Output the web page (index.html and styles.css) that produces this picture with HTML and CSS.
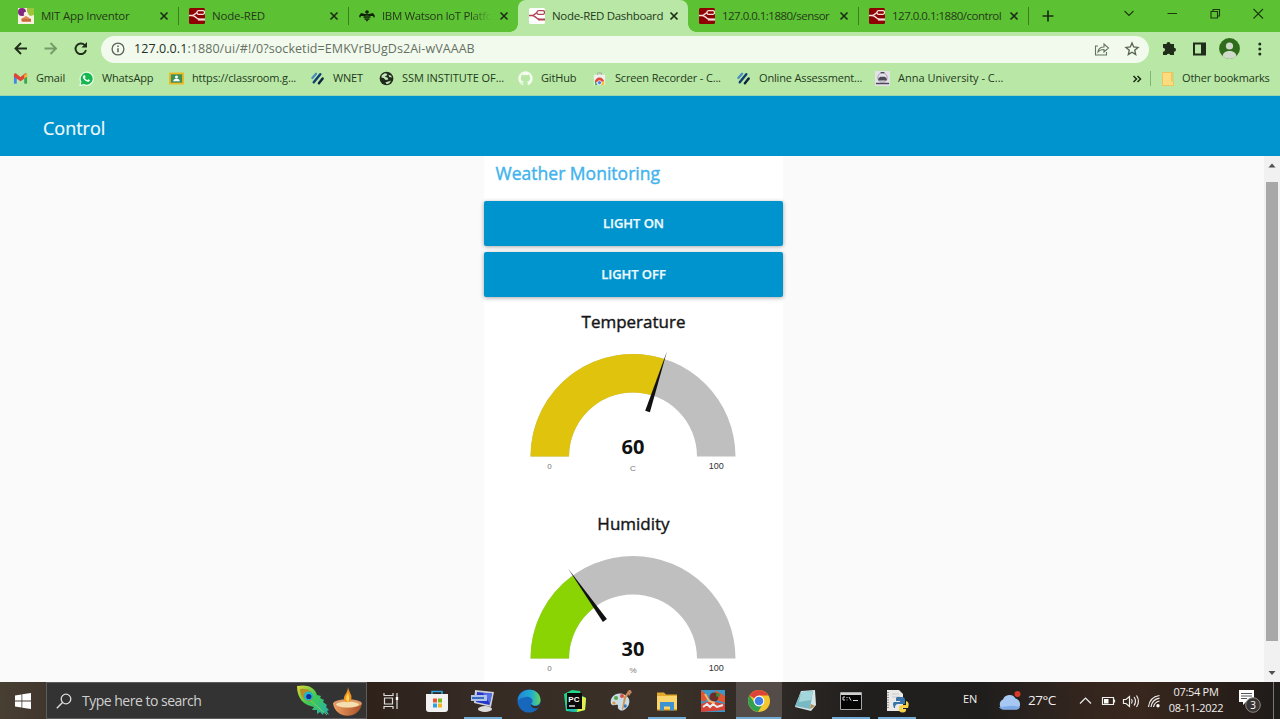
FILE: index.html
```html
<!DOCTYPE html>
<html lang="en">
<head>
<meta charset="utf-8">
<title>Node-RED Dashboard</title>
<link rel="stylesheet" href="styles.css">
</head>
<body>
<svg class="defs" width="0" height="0">
  <defs>
    <symbol id="close" viewBox="0 0 10 10"><path d="M1.5 1.5l7 7M8.5 1.5l-7 7" stroke="#1c2e14" stroke-width="1.7"/></symbol>
    <symbol id="nodered" viewBox="0 0 16 16"><rect width="16" height="16" rx="1.5" fill="#8f0000"/><path d="M0 7.500h3c3 0 3-3 6-3M3 7.500c4 0 4 4 7.500 4" fill="none" stroke="#f3dcdc" stroke-width="1.500"/><rect x="8" y="2.700" width="7.500" height="3.600" rx="1.600" fill="#8f0000" stroke="#f3dcdc" stroke-width="1.300"/><path d="M9 11.500h7" stroke="#f3dcdc" stroke-width="2.200"/></symbol>
    <symbol id="wnet" viewBox="0 0 16 16"><g fill="none" stroke-linecap="round"><path d="M2.500 7.500L6.500 3" stroke="#4b8dbd" stroke-width="2.400"/><path d="M4 12L11 3.500" stroke="#123f73" stroke-width="2.600"/><path d="M9.500 13L13.500 8" stroke="#10233c" stroke-width="2.600"/></g></symbol>
  </defs>
</svg>

<div class="screen">
<header class="browser">
  <div class="tabstrip">
    <div class="tab">
      <svg class="fav" viewBox="0 0 16 16"><rect width="16" height="16" fill="#f6f1e4"/><circle cx="4" cy="4" r="4" fill="#82287e"/><path d="M9 0h7v7l-4 1-3-3z" fill="#9cc53c"/><circle cx="8" cy="6" r="2.300" fill="#f6f1e4"/><path d="M3 11l5-3 5 3v3H4z" fill="#df8a4c"/><path d="M4 12h9" stroke="#a44b36"/></svg>
      <span class="title t1">MIT App Inventor</span><svg class="close"><use href="#close"/></svg>
    </div>
    <div class="tab"><svg class="fav"><use href="#nodered"/></svg><span class="title t2">Node-RED</span><svg class="close"><use href="#close"/></svg></div>
    <div class="tab">
      <svg class="fav" viewBox="0 0 16 16"><g fill="#10210a"><path d="M0 8l2-3 4 1 1 1-1 1-4 0-1 2zM16 8l-2-3-4 1-1 1 1 1 4 0 1 2z"/><circle cx="8" cy="4" r="1.800"/><rect x="5" y="6" width="6" height="1.700"/><rect x="4.500" y="8.300" width="7" height="1.500"/><rect x="5.500" y="10.400" width="5" height="1.400"/><rect x="7" y="12.200" width="2" height="1"/></g></svg>
      <span class="title t3 fade">IBM Watson IoT Platfo</span><svg class="close"><use href="#close"/></svg>
    </div>
    <div class="tab active">
      <svg class="fav" viewBox="0 0 16 16"><rect width="16" height="16" rx="1.500" fill="#fff"/><path d="M0 7.500h3c3 0 3-3 6-3M3 7.500c4 0 4 4 7.500 4" fill="none" stroke="#b04456" stroke-width="1.500"/><rect x="8" y="2.700" width="7.500" height="3.600" rx="1.600" fill="#fff" stroke="#b04456" stroke-width="1.300"/><path d="M9 11.500h7" stroke="#b04456" stroke-width="2"/></svg>
      <span class="title t4">Node-RED Dashboard</span><svg class="close"><use href="#close"/></svg>
    </div>
    <div class="tab"><svg class="fav"><use href="#nodered"/></svg><span class="title t5">127.0.0.1:1880/sensor</span><svg class="close"><use href="#close"/></svg></div>
    <div class="tab"><svg class="fav"><use href="#nodered"/></svg><span class="title t6">127.0.0.1:1880/control</span><svg class="close"><use href="#close"/></svg></div>
    <svg class="newtab" viewBox="0 0 12 12"><path d="M6 .5v11M.5 6h11" stroke="#1c2e14" stroke-width="1.700"/></svg>
    <svg class="wincontrols" viewBox="0 0 150 28"><g fill="none" stroke="#1c3a10" stroke-width="1.100"><path d="M4.500 11l4.500 4.500 4.500-4.500M47.500 13.500h9.500M91 11.500h6.500v6.500h-6.500zM93 11.500v-2h6.500v6.500h-2M133.500 9l9.500 9.500M143 9l-9.500 9.500"/></g></svg>
  </div>

  <div class="toolbar">
    <svg class="nav" viewBox="0 0 90 30"><g fill="none" stroke="#1f2d1a" stroke-width="1.900"><path d="M27 14.500H15.500M21 9l-5.500 5.500L21 20"/><path d="M44.500 14.500H56M50.500 9l5.500 5.500-5.500 5.500" stroke="#759b68"/><path d="M84.800 11.200a5.300 5.300 0 1 0 1.200 4.800"/></g><path d="M87 8v5.500h-5.500z" fill="#1f2d1a"/></svg>
    <div class="omnibox">
      <svg class="info" viewBox="0 0 14 14"><circle cx="7" cy="7" r="5.900" fill="none" stroke="#5a6158" stroke-width="1.300"/><path d="M7 6.300v4M7 3.500v1.400" stroke="#5a6158" stroke-width="1.500"/></svg>
      <span class="url"><b>127.0.0.1</b>:1880/ui/#!/0?socketid=EMKVrBUgDs2Ai-wVAAAB</span>
      <svg class="share" viewBox="0 0 16 16"><path d="M4 5H1.500v9h11v-3M4 11c.3-3.500 2.500-5 6-5V3l4.500 4L10 11V8.500c-3 0-4.600.7-6 2.500z" fill="none" stroke="#64725e" stroke-width="1.100"/></svg>
      <svg class="star" viewBox="0 0 16 16"><path d="M8 2l1.700 4 4.300.4-3.300 2.800 1 4.300L8 11.200l-3.700 2.300 1-4.300L2 6.400 6.300 6z" fill="none" stroke="#56634f" stroke-width="1.300"/></svg>
    </div>
    <svg class="actions" viewBox="0 0 110 30"><path d="M4 10h3.500a2 2 0 0 1 4 0H15v3.700a2 2 0 0 1 0 4V21h-3.700a2 2 0 0 0-3.600 0H4v-3.300a2 2 0 0 0 0-4z" fill="#1f2d1a"/><rect x="35" y="9.500" width="11" height="11" fill="none" stroke="#1f2d1a" stroke-width="2"/><path d="M42 9h5v12h-5z" fill="#1f2d1a"/><circle cx="70.500" cy="14.500" r="10.400" fill="#2f6c1b"/><circle cx="70.500" cy="12" r="3.600" fill="#d0dacb"/><path d="M63.500 22.200c.5-7 13.500-7 14 0a10.400 10.400 0 0 1-14 0z" fill="#d0dacb"/><g fill="#1f2d1a"><circle cx="100.800" cy="10" r="1.500"/><circle cx="100.800" cy="15" r="1.500"/><circle cx="100.800" cy="20" r="1.500"/></g></svg>
  </div>

  <div class="bookmarks">
    <div class="bm"><svg class="bi" viewBox="0 0 16 16"><path d="M1 4h3v9.500H1z" fill="#4485ec"/><path d="M12 4h3v9.500h-3z" fill="#34a853"/><path d="M1 3l2-.5L8 6.500l5-4 2 .5v3l-7 5-7-5z" fill="#df4638"/><path d="M12 4l3-1v3l-3 2z" fill="#f4b92e"/></svg><span class="b1">Gmail</span></div>
    <div class="bm"><svg class="bi" viewBox="0 0 16 16"><path d="M1 15.500l1-4A7 7 0 1 1 5 14.500z" fill="#14b84c" stroke="#f1fbf1" stroke-width="1.200"/><path d="M5 4.500l1.500.3.500 1.700-.8 1c.8 1.300 1.400 1.800 2.600 2.300l1-.9 1.800.8c-.1 1.500-1.100 2-2.300 1.800C6.500 10.800 4 8.500 4 6.200z" fill="#fff"/></svg><span class="b2">WhatsApp</span></div>
    <div class="bm"><svg class="bi" viewBox="0 0 16 16"><rect x="0" y="1.500" width="16" height="13" rx="1" fill="#efb923"/><rect x="2" y="3.500" width="12" height="9" fill="#3d9158"/><circle cx="8" cy="6.500" r="1.600" fill="#fff"/><path d="M4.500 11c0-3.500 7-3.500 7 0z" fill="#fff"/></svg><span class="b3">https://classroom.g...</span></div>
    <div class="bm"><svg class="bi"><use href="#wnet"/></svg><span class="b4">WNET</span></div>
    <div class="bm"><svg class="bi" viewBox="0 0 16 16"><circle cx="8" cy="8" r="7.300" fill="#20291d"/><path d="M3 4.500l3-2 3 .5-1 2-2 1 3 1 1 2-3 .5L5 7.500 2.500 7zM10 4l3 1 .8 2-2.800-.5zM7 12l4-1 2-1-2 3-3 1z" fill="#c3e7b6"/></svg><span class="b5">SSM INSTITUTE OF...</span></div>
    <div class="bm"><svg class="bi" viewBox="0 0 16 16"><path d="M8 .3a7.700 7.700 0 0 0-2.400 15v-2c-2.200.5-2.700-1-3-1.700.9 0 1.300 1.200 3 .8.100-.5.300-.8.600-1C4.500 11 3 10.300 3 7.700c0-.9.300-1.500.8-2-.1-.8-.1-1.400.1-2 .8 0 1.500.4 2 .8a8 8 0 0 1 4.200 0c.5-.4 1.200-.8 2-.8.2.600.2 1.200.1 2 .5.500.8 1.100.8 2 0 2.600-1.500 3.300-3.200 3.700.4.400.6.900.6 1.600v2.300A7.700 7.700 0 0 0 8 .3z" fill="#f3fcef"/></svg><span class="b6">GitHub</span></div>
    <div class="bm"><svg class="bi" viewBox="0 0 16 16"><path d="M2 4h12v11H2z" fill="#eef0ee"/><path d="M6 4V2h4v2" fill="none" stroke="#aaa"/><path d="M3 12a5 5 0 0 1 10 0z" fill="#df493b"/><path d="M3 10l3 5H3.500z" fill="#34a853"/><path d="M13 11v4h-4l2-4z" fill="#f6c333"/><circle cx="8" cy="12.500" r="2.200" fill="#4b82e8" stroke="#fff" stroke-width=".8"/></svg><span class="b7">Screen Recorder - C...</span></div>
    <div class="bm"><svg class="bi"><use href="#wnet"/></svg><span class="b8">Online Assessment...</span></div>
    <div class="bm"><svg class="bi" viewBox="0 0 16 16"><rect width="16" height="16" fill="#e4e2e8"/><circle cx="8" cy="7" r="5" fill="none" stroke="#a29da8"/><path d="M3.500 8l2-2h5l2 2v2h-9zM1 12.500h14v1.500H1zM6 1h4v1.500H6z" fill="#4f4a57"/></svg><span class="b9">Anna University - C...</span></div>
    <svg class="more" viewBox="0 0 10 10"><path d="M1.500 2l3 3-3 3M5.500 2l3 3-3 3" fill="none" stroke="#1c2e14" stroke-width="1.500"/></svg>
    <i class="bar"></i>
    <svg class="folder" viewBox="0 0 12 14"><path d="M.5.500h9v8.500l2 1v3.500H.500z" fill="#fbdc7f" stroke="#f0c25c"/><path d="M9.500.5h1.500V9" fill="none" stroke="#e8c25f"/></svg>
    <span class="other">Other bookmarks</span>
  </div>
</header>

<div class="appbar"><h1>Control</h1></div>

<main class="page">
  <section class="card">
    <h2>Weather Monitoring</h2>
    <button class="btn on">LIGHT ON</button>
    <button class="btn off">LIGHT OFF</button>
    <div class="gauge">
      <h3 class="temp">Temperature</h3>
      <svg class="dial" viewBox="0 0 299 150">
        <path d="M46.500 126.500a102.500 102.500 0 0 1 205 0h-38.500a64 64 0 0 0-128 0z" fill="#bfbfbf"/>
        <path d="M46.500 126.500A102.500 102.500 0 0 1 180.700 29L168.800 65.600A64 64 0 0 0 85 126.500z" fill="#dfc30c"/>
        <path d="M183 21.200L165.900 82.200l-4.700-1.400z" fill="#111"/>
        <text class="value" x="149" y="124.300">60</text>
        <text class="unit" x="149" y="141">C</text>
        <text class="unit" x="65.500" y="139">0</text>
        <text class="max" x="232.300" y="139">100</text>
      </svg>
    </div>
    <div class="gauge">
      <h3 class="hum">Humidity</h3>
      <svg class="dial" viewBox="0 0 299 150">
        <path d="M46.500 126.500a102.500 102.500 0 0 1 205 0h-38.500a64 64 0 0 0-128 0z" fill="#bfbfbf"/>
        <path d="M46.500 126.500A102.500 102.500 0 0 1 88.700 43.600L111.400 74.700A64 64 0 0 0 85 126.500z" fill="#8bd404"/>
        <path d="M84 36.500L122.900 86.900l-4 3z" fill="#111"/>
        <text class="value" x="149" y="124.300">30</text>
        <text class="unit" x="149" y="141">%</text>
        <text class="unit" x="65.500" y="139">0</text>
        <text class="max" x="232.300" y="139">100</text>
      </svg>
    </div>
  </section>
  <div class="scrollbar">
    <svg viewBox="0 0 16 16"><path d="M4.500 10.500L8 6.500l3.500 4z" fill="#505050"/></svg>
    <div class="thumb"></div>
    <svg viewBox="0 0 16 16"><path d="M4.500 6L8 10l3.500-4z" fill="#505050"/></svg>
  </div>
</main>

<footer class="taskbar">
  <div class="start"><svg viewBox="0 0 16 16"><path d="M0 2.500l6.500-1v6H0zM7.300 1.300L16 0v7.500H7.300zM0 8.500h6.500v6L0 13.500zM7.300 8.500H16V16l-8.700-1.200z" fill="#fff"/></svg></div>
  <div class="search">
    <svg class="lens" viewBox="0 0 16 16"><circle cx="10" cy="6" r="4.800" fill="none" stroke="#ddd" stroke-width="1.300"/><path d="M6.500 9.500L.8 15.200" stroke="#ddd" stroke-width="1.400"/></svg>
    <span>Type here to search</span>
    <svg class="diwali" viewBox="0 0 70 34">
      <defs><linearGradient id="fe" x2="1" y2="1"><stop stop-color="#e4d832"/><stop offset=".45" stop-color="#3fca52"/><stop offset="1" stop-color="#24aeb4"/></linearGradient><linearGradient id="bowl" x2="1"><stop stop-color="#f0a264"/><stop offset="1" stop-color="#a84d27"/></linearGradient></defs>
      <path d="M1 2c10-2 18 1 20 9l4 1-1 2 4 2-1 2 4 3-1 2 3 3-2 1 2 4-5-3-1 3-3-3-3 2 0-4-5 0 2-3C8 21 1 15 1 2z" fill="url(#fe)"/>
      <path d="M4 5c8-1 13 2 13 8 0 4-4 6-7 3C6 14 4 10 4 5z" fill="#b68c28"/><circle cx="12.500" cy="12" r="4.500" fill="#17b8d5"/><circle cx="12.800" cy="12.500" r="2.600" fill="#132d93"/><path d="M15 17l16 14" stroke="#99d444" stroke-width=".8"/>
      <path d="M37 19c2 17 27 17 29 0z" fill="url(#bowl)"/><ellipse cx="51.500" cy="19.500" rx="14.300" ry="4.200" fill="#df9966"/><ellipse cx="51.500" cy="20.500" rx="11.500" ry="2.900" fill="#f4dfb1"/><path d="M52 3c1 6 5 8 3 13-1 3-6 3-7 0-1-5 4-7 4-13z" fill="#f29320"/><path d="M52 9c1 3 2 7 0 9-3-2-2-6 0-9z" fill="#ffd35c"/>
    </svg>
  </div>
  <div class="apps">
    <div class="app"><svg viewBox="0 0 24 24"><g fill="none" stroke="#ddd" stroke-width="1.200"><path d="M5 4v2.500h9V4M5 20v-2.500h9V20M5.500 9h8v6h-8zM18 4v16"/></g><path d="M16.800 8h2.400v3h-2.400z" fill="#fff"/></svg></div>
    <div class="app"><svg viewBox="0 0 24 24"><path d="M7 6V2.500h10V6" fill="none" stroke="#2ca4dd" stroke-width="1.600"/><path d="M1 5h22v15a3 3 0 0 1-3 3H4a3 3 0 0 1-3-3z" fill="#f2f2f2"/><path d="M8 9.500h4v4H8z" fill="#e95432"/><path d="M13 9.500h4v4h-4z" fill="#79b51c"/><path d="M8 14.500h4v4H8z" fill="#30a3df"/><path d="M13 14.500h4v4h-4z" fill="#f4b51e"/></svg></div>
    <div class="app run"><svg viewBox="0 0 24 24"><path d="M4 1l19 2-3 15L3 14z" fill="#cfd1d8"/><path d="M6 3l15 1.500-2.500 11.500L5 13z" fill="#2637c7"/><path d="M12 4l9 .5-2 10z" fill="#5770e8"/><path d="M0 6h16v6H0z" fill="#aec4ed"/><path d="M1 9h12" stroke="#3c6bba" stroke-width="2"/><ellipse cx="14" cy="20" rx="7" ry="3" fill="#dcdcdc"/></svg></div>
    <div class="app"><svg viewBox="0 0 24 24"><defs><linearGradient id="ed" x2="1"><stop stop-color="#2087d6"/><stop offset=".6" stop-color="#20adcf"/><stop offset="1" stop-color="#65d65b"/></linearGradient></defs><circle cx="12" cy="12" r="11.500" fill="#1768bd"/><path d="M.8 11C2-2 23-3 23.500 11c0 6-7 7-9.500 4 4-4-1-8-5-7-4 .5-7 2-7.700 3z" fill="url(#ed)"/><path d="M14 15c2 3 7 2.500 9.500 0-1 2-2 3-3 4-4 1-7-1-6.500-4z" fill="#352c26"/></svg></div>
    <div class="app"><svg viewBox="0 0 24 24"><path d="M1 5l8-4 8 1 1 4 5 3-1 12-8 2-11-1z" fill="#21d789"/><path d="M17 7l6 2-1 12-8 2z" fill="#e6ed4d"/><path d="M2 15l4 7 6 1-2-7z" fill="#1eb7c5"/><path d="M4 4h15v16H4z" fill="#090909"/><text x="5.300" y="12.500" class="pc">PC</text><path d="M6 17h6" stroke="#fff" stroke-width="1.300"/></svg></div>
    <div class="app"><svg viewBox="0 0 24 24"><path d="M2 15C0 7 9 2 16 6c7 3 5 12-1 15-4 2-7-2-6-4 0-3-5 1-7-2z" fill="#c8dce4"/><circle cx="7" cy="9" r="2" fill="#58a448"/><circle cx="13" cy="7" r="2" fill="#da5146"/><circle cx="5" cy="14" r="1.600" fill="#e0983a"/><circle cx="16" cy="17" r="1.800" fill="#2d75bd"/><path d="M22 1l-5 8-3 12-1-1 2-12 5-7z" fill="#d38e51"/><path d="M18 3l3-2 2 2-3 4z" fill="#bf8262"/></svg></div>
    <div class="app run"><svg viewBox="0 0 24 24"><path d="M2 3.500h7l2 2h11v16H2z" fill="#e2a92d"/><path d="M2 7h20v13H2z" fill="#fbd56b"/><path d="M5 21.500v-8.500h14v8.500h-4v-4H9v4z" fill="#3d92cf"/></svg></div>
    <div class="app"><svg viewBox="0 0 24 24"><path d="M0 1h24v22H0z" fill="#3c96c7"/><path d="M0 1l8 7-5 5-3-2zM14 1l10 6v7l-8-3z" fill="#df5631"/><circle cx="13" cy="8" r="4.500" fill="#6a2e28"/><circle cx="17" cy="6" r="2" fill="#3b8b40"/><path d="M0 15l9-3 15 3v6L0 23z" fill="#d74436"/><path d="M2 18l4-3 3 3 3-3 4 3 6-2" fill="none" stroke="#e8eef2" stroke-width="2"/><path d="M4 5l4 7 6 2" stroke="#f1b36f" stroke-width="2" fill="none"/></svg></div>
    <div class="app run current"><svg viewBox="0 0 24 24"><circle cx="12" cy="12" r="11" fill="#f4c52c"/><path d="M12 12L2.500 6.500A11 11 0 0 1 21.500 6.500H12z" fill="#dd4437"/><path d="M2.500 6.500a11 11 0 0 0 8.500 16.400l5-8.400-4-2.500-4.500 1.500z" fill="#32a04f"/><circle cx="12" cy="12" r="5.400" fill="#fff"/><circle cx="12" cy="12" r="4.300" fill="#3f7fe5"/></svg></div>
    <div class="app"><svg viewBox="0 0 24 24"><path d="M8 2l14-1 1 15-5 6-16-4z" fill="#d7e7e7"/><path d="M8 3l12-1-3 18-15-3z" fill="#78b9c3"/><path d="M8 3l12-1-2 9-12 2z" fill="#a4d5db"/><path d="M17 20l1-5 4 2z" fill="#b88c50"/></svg></div>
    <div class="app run"><svg viewBox="0 0 24 24"><path d="M1.500 3.500h21v17h-21z" fill="#050505" stroke="#a7a7a7"/><path d="M2 4h20v2H2z" fill="#d0d0d0"/><path d="M6 8H4v3h2M8 8v1M8 10.500v.8M10 8l2 3.500M14 11.500h5" fill="none" stroke="#ddd"/></svg></div>
    <div class="app run"><svg viewBox="0 0 24 24"><path d="M2 1h12l4 4v17H2z" fill="#e9e9e9"/><path d="M3 3v17" stroke="#777" stroke-width="1.500" stroke-dasharray="1 1.500"/><path d="M7 5h7M7 8h8" stroke="#c8c8c8"/><path d="M12 8h5q3 0 3 3v4h-7q-3 0-3 4H9q-2-5 0-6h6v-1h-4V9z" fill="#3a73a8"/><path d="M21 12q4 1 2 7h-6v1h4v2q-3 3-7 0v-3q0-3 3-3h4z" fill="#f6d24a"/></svg></div>
  </div>
  <div class="tray">
    <span class="lang">EN</span>
    <svg class="weather" viewBox="0 0 26 22"><path d="M6 19.500a5.500 5.500 0 0 1 0-10 7 7 0 0 1 12.500-1 5.800 5.800 0 0 1 1 11z" fill="#a8c8f4"/><path d="M2 17c5 1 10-3 21 0-1 2-2 2.500-4 2.500H6c-2 0-3-1-4-2.500z" fill="#7eaae8"/><circle cx="20.500" cy="4" r="3" fill="#d63927"/></svg>
    <span class="deg">27°C</span>
    <svg class="sys" viewBox="0 0 84 24"><g fill="none" stroke="#eee" stroke-width="1.200"><path d="M4 14.500L9.500 9l5.500 5.500M26.500 8.500h11v7h-11zM38.500 10.500v3M47.500 10.500h2.500l3.500-3v10l-3.500-3h-2.500zM55.500 10q1.500 2 0 4.500M58 8q3 4 0 8.500M60.500 6.500q4 6 0 11.500"/><path d="M72.500 18q1-10 11-11.500M75 18q1-7.500 8.500-8.800M77.500 18q1-5 6-6"/></g><path d="M28 10h4.500v4.500H28z" fill="#fff"/><circle cx="82" cy="16.800" r="1.700" fill="#fff"/></svg>
    <div class="clock"><span class="time">07:54 PM</span><span class="date">08-11-2022</span></div>
    <svg class="notice" viewBox="0 0 26 26"><path d="M2 2h15v12H9l-3 3v-3H2z" fill="#fff"/><path d="M4 5.500h11M4 8h11M4 10.500h6" stroke="#555"/><circle cx="16" cy="17" r="7.300" fill="#393532" stroke="#8d8987"/><text x="16" y="20.800" class="count">3</text></svg>
    <i class="peek"></i>
  </div>
</footer>
</div>
</body>
</html>
```
FILE: styles.css
```css
* { box-sizing: border-box; }
body { margin: 0; overflow: hidden; font-family: "Open Sans", "Noto Sans", sans-serif; }
svg { display: block; flex: none; }
.defs { position: absolute; }
.screen { width: 1280px; height: 719px; display: flex; flex-direction: column; overflow: hidden; }

.browser { height: 96px; flex: none; background: #b9e8a6; border-bottom: 1px solid #9bd6b0; color: #24391c; }
.tabstrip { height: 32px; background: #5dc233; display: flex; align-items: center; padding-left: 8px; }
.tab { width: 170px; height: 32px; display: flex; align-items: center; padding: 0 9px 0 11px; position: relative; flex: none; }
.tab:first-child { padding-left: 10px; }
.tab:not(.active):not(:nth-child(3))::after { content: ""; position: absolute; right: -1px; top: 7px; width: 1px; height: 18px; background: #36811c; }
.tab.active { background: #b9e8a6; border-radius: 8px 8px 0 0; }
.tab.active::before, .tab.active::after { content: ""; position: absolute; bottom: 0; width: 8px; height: 8px; }
.tab.active::before { left: -8px; background: radial-gradient(circle at 0 0, transparent 7.500px, #b9e8a6 8px); }
.tab.active::after { right: -8px; background: radial-gradient(circle at 100% 0, transparent 7.500px, #b9e8a6 8px); }
.fav { width: 16px; height: 16px; margin-right: 7px; }
.title { font-size: 11.500px; white-space: nowrap; line-height: 18px; }
.close { width: 10px; height: 10px; margin-left: auto; }
.fade { -webkit-mask-image: linear-gradient(90deg, #000 78%, transparent); mask-image: linear-gradient(90deg, #000 78%, transparent); }
.t1 { letter-spacing: -.25px; } .t2 { letter-spacing: -.2px; } .t3 { letter-spacing: -.37px; } .t4 { letter-spacing: -.32px; } .t5 { letter-spacing: -.52px; } .t6 { letter-spacing: -.5px; }
.newtab { width: 12px; height: 12px; margin-left: 14px; }
.wincontrols { width: 150px; height: 28px; margin: 0 0 4px 66px; }

.toolbar { height: 34px; display: flex; align-items: center; }
.nav { width: 90px; height: 30px; margin-right: 11px; }
.omnibox { width: 1048px; height: 27px; background: #f2faee; border-radius: 14px; display: flex; align-items: center; padding: 0 9px 0 10px; }
.info { width: 14px; height: 14px; margin-right: 9px; }
.url { font-size: 12.500px; color: #657062; letter-spacing: .07px; white-space: nowrap; flex: 1; position: relative; top: -1px; }
.url b { color: #24301f; font-weight: 400; }
.share { width: 16px; height: 16px; margin-right: 14px; }
.star { width: 16px; height: 16px; }
.actions { width: 110px; height: 30px; margin-left: 10px; }

.bookmarks { height: 25px; display: grid; grid-template-columns: 66px 90px 141px 69px 139px 74px 144px 139px 257px 18px 12px 20px 1fr; align-items: center; padding-left: 13px; font-size: 11px; white-space: nowrap; }
.bm { display: flex; align-items: center; }
.bi { width: 15px; height: 15px; margin-right: 8px; }
.b1, .b2, .b3, .b4, .b5, .b6, .b7, .b8, .b9, .other { letter-spacing: -.16px; }
.b5 { letter-spacing: -.06px; }
.b9 { letter-spacing: 0; }
.other { letter-spacing: -.18px; }
.more { width: 10px; height: 10px; }
.bar { width: 1px; height: 15px; background: #80b770; }
.folder { width: 12px; height: 14px; }
.bookmarks span { line-height: 14px; padding-bottom: 1px; }

.appbar { height: 60px; flex: none; background: #0094ce; display: flex; align-items: center; padding: 4px 0 0 43px; }
.appbar h1 { margin: 0; color: #f5fbfd; font-size: 18px; font-weight: 400; line-height: 24px; -webkit-text-stroke: .2px; }
.page { height: 526px; flex: none; background: #fafafa; display: flex; justify-content: space-between; padding-left: 484px; overflow: hidden; }
.card { width: 299px; background: #fff; display: flex; flex-direction: column; }
.card h2 { margin: 0; height: 45px; flex: none; padding: 5px 0 0 11.500px; font-size: 17.500px; line-height: 25px; font-weight: 500; color: #42b3ed; white-space: nowrap; -webkit-text-stroke: .4px; letter-spacing: .02px; }
.btn { height: 45px; flex: none; border: 0; border-radius: 2px; margin: 0 0 6px; background: #0094ce; color: #eef9fd; font: 600 13px/45px "Open Sans", sans-serif; padding: 0; box-shadow: 0 1px 4px rgba(0,0,0,.35); -webkit-text-stroke: .25px; letter-spacing: -.05px; }
.btn.off { margin-bottom: 12px; }
.gauge { height: 202.200px; flex: none; text-align: center; }
.gauge h3 { margin: 0; height: 21px; font-size: 17px; line-height: 25px; font-weight: 500; color: #151515; -webkit-text-stroke: .4px; }
.dial { width: 299px; height: 150px; }
.dial text { text-anchor: middle; }
.value { font: 700 20px "Open Sans", sans-serif; fill: #111; }
.unit { font: 8px "Liberation Sans", sans-serif; fill: #777; }
.max { font: 9px "Liberation Sans", sans-serif; fill: #333; }
.scrollbar { width: 16px; background: #f1f1f1; display: flex; flex-direction: column; padding-top: 1px; }
.scrollbar svg { width: 16px; height: 16px; }
.thumb { width: 12px; height: 459px; margin: 9px 2px 24px; background: #a8a8a8; }

.taskbar { height: 37px; flex: none; display: flex; color: #f1efee; background: linear-gradient(90deg, #483f33 0, #41362d 46px, #2e221b 370px, #352b24 470px, #3b3128 660px, #2e2925 780px, #211f1e 860px, #1f1e1d 980px, #33251e 1080px, #38271d 1140px, #281e19 1230px, #1f1c1a 1280px); }
.start { width: 46px; display: grid; place-items: center; }
.start svg { width: 16px; height: 16px; }
.search { width: 321px; border: 1px solid #5c5c5c; background: #333; display: flex; align-items: center; padding-left: 9px; color: #d0d0d0; font-size: 14px; white-space: nowrap; }
.search span { width: 206px; letter-spacing: -.5px; }
.lens { width: 16px; height: 16px; margin-right: 10px; }
.diwali { width: 70px; height: 34px; margin-left: 10px; }
.apps { display: flex; width: 553px; padding-left: 1px; }
.app { width: 46px; height: 37px; display: grid; place-items: center; position: relative; flex: none; }
.app svg { width: 24px; height: 24px; }
.app.run::after { content: ""; position: absolute; left: 4px; bottom: 0; width: 38px; height: 2px; background: #70add9; }
.app.current { background: #544c48; }
.app.current::after { left: 0; width: 45px; }
.pc { font: 700 8px "Liberation Sans", sans-serif; fill: #fff; }
.tray { flex: 1; display: flex; align-items: center; padding-left: 43px; font-size: 11px; white-space: nowrap; }
.lang { width: 34px; font-size: 11px; padding-bottom: 5px; }
.weather { width: 26px; height: 22px; margin-right: 5px; }
.deg { width: 48px; font-size: 13.500px; letter-spacing: -.5px; padding-bottom: 1px; }
.sys { width: 84px; height: 24px; margin-right: 6px; }
.clock { width: 60px; display: flex; flex-direction: column; align-items: center; line-height: 16px; letter-spacing: -.3px; margin-right: 11px; padding-bottom: 1px; }
.notice { width: 26px; height: 26px; }
.count { font: 10px "Open Sans", sans-serif; fill: #fff; text-anchor: middle; }
.peek { width: 1px; height: 37px; background: #777; margin-left: 10px; }
```
